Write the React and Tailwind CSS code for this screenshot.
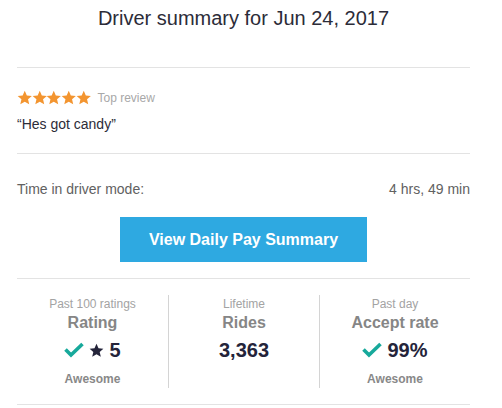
import React from "react";

const STAR = "M12 1.2l3.2 7.2 7.8.7-5.9 5.2 1.8 7.7L12 18l-6.9 4 1.8-7.7L1 9.1l7.8-.7z";

function Star({ className }) {
  return (
    <svg viewBox="0 0 24 24" className={className} fill="currentColor">
      <path d={STAR} />
    </svg>
  );
}

function Check() {
  return (
    <svg viewBox="0 0 20 16" className="w-[20px] h-[16px] text-[#17a99b]" fill="none" stroke="currentColor" strokeWidth="3.6">
      <path d="M1.5 7.5l5.5 5.5L18.5 2" />
    </svg>
  );
}

function Stat({ label, title, value, note, check, star, first }) {
  return (
    <div className={`flex flex-col items-center h-[93px] ${first ? "" : "border-l border-[#d4d4d4]"}`}>
      <div className="pt-[2px] text-[12px] leading-[14px] text-[#a3a3a3]">{label}</div>
      <div className="mt-[3px] text-[16px] leading-[18px] font-bold text-[#868686]">{title}</div>
      <div className="mt-[6px] flex items-center gap-[5px] text-[20px] leading-[24px] font-bold text-[#24243a]">
        {check && <Check />}
        {star && <Star className="w-[15px] h-[15px]" />}
        <span>{value}</span>
      </div>
      {note && <div className="mt-[10px] text-[12px] leading-[14px] font-bold text-[#888]">{note}</div>}
    </div>
  );
}

export default function App() {
  return (
    <div className="w-[470px] h-[408px] bg-white pl-[17px] font-['Liberation_Sans',Arial,sans-serif]">
      <div className="pt-[7px] pb-[37px] border-b border-[#e3e3e3] text-center text-[20px] leading-[23px] text-[#2c2c38]">
        Driver summary for Jun 24, 2017
      </div>

      <div className="pt-[22px] pb-[21px] border-b border-[#e3e3e3]">
        <div className="flex items-center h-[16px]">
          <div className="flex text-[#f39530]">
            {[0, 1, 2, 3, 4].map((i) => (
              <Star key={i} className="w-[15.5px] h-[15.5px] -mr-[0.8px]" />
            ))}
          </div>
          <span className="ml-[7px] text-[12px] text-[#a8a8a8]">Top review</span>
        </div>
        <div className="mt-[10px] text-[14px] leading-[16px] text-[#2c2c38]">“Hes got candy”</div>
      </div>

      <div className="pt-[27px] pb-[16px] border-b border-[#e3e3e3]">
        <div className="flex justify-between text-[14px] leading-[16px] text-[#616161]">
          <span>Time in driver mode:</span>
          <span>4 hrs, 49 min</span>
        </div>
        <div className="mt-[20px] flex justify-center">
          <button className="w-[247px] h-[45px] bg-[#2ea9e1] text-white text-[16px] font-bold">
            View Daily Pay Summary
          </button>
        </div>
      </div>

      <div className="pt-[16px] pb-[16px] border-b border-[#e3e3e3] grid grid-cols-3">
        <Stat first label="Past 100 ratings" title="Rating" value="5" note="Awesome" check star />
        <Stat label="Lifetime" title="Rides" value="3,363" />
        <Stat label="Past day" title="Accept rate" value="99%" note="Awesome" check />
      </div>
    </div>
  );
}
